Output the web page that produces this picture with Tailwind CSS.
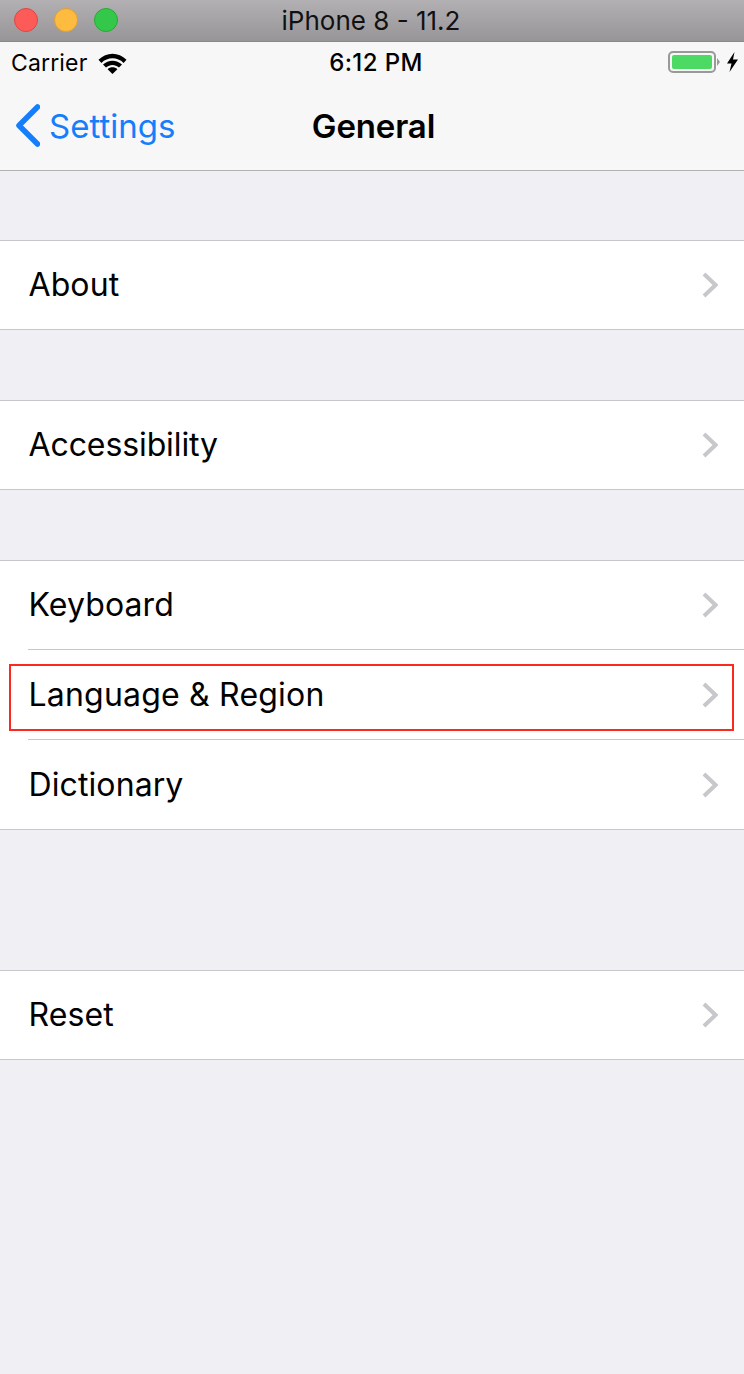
<!DOCTYPE html>
<html>
<head>
  <meta charset="UTF-8" />
  <title>General</title>
  <script src="https://cdn.jsdelivr.net/npm/@tailwindcss/browser@4"></script>
</head>
<body class="w-[744px] h-[1374px] overflow-hidden bg-[#efeff4] font-['Inter','Liberation_Sans',sans-serif] text-black">

  <!-- window title bar -->
  <div class="relative h-[42px] flex items-center justify-center bg-gradient-to-b from-[#b3b0b3] to-[#989598] border-b border-[#8a888a]">
    <div class="absolute left-[14px] top-[8px] flex gap-[16px]">
      <div class="w-[24px] h-[24px] rounded-full bg-[#fc5b57] border border-[#df4744]"></div>
      <div class="w-[24px] h-[24px] rounded-full bg-[#fdbc40] border border-[#de9f34]"></div>
      <div class="w-[24px] h-[24px] rounded-full bg-[#34c84a] border border-[#27aa35]"></div>
    </div>
    <span class="text-[26px] leading-[42px] text-[#111] mr-[2px]">iPhone 8 - 11.2</span>
  </div>

  <!-- status + nav bar -->
  <div class="h-[129px] bg-[#f7f7f7] border-b border-[#b2b2b2] flex flex-col">
    <div class="relative h-[40px] flex items-center justify-center">
      <div class="absolute left-[11px] top-[7px] flex items-center gap-[11px]">
        <span class="text-[23px] leading-[28px] tracking-[0.15px]">Carrier</span>
        <svg width="29" height="21" viewBox="0 0 29 21" fill="#000">
          <path d="M0.5 6.8C8.5 -1.4 20.5 -1.4 28.5 6.8L25.6 9.9C19.3 3.8 9.7 3.8 3.4 9.9Z"/>
          <path d="M5 11.5C10.3 6.4 18.7 6.4 24 11.5L21 14.6C17.2 11.1 11.8 11.1 8 14.6Z"/>
          <path d="M9.6 16.2C12.4 13.7 16.6 13.7 19.4 16.2L14.5 21Z"/>
        </svg>
      </div>
      <span class="text-[24px] leading-[28px] font-medium tracking-[0.4px] mt-[2px] ml-[8px]">6:12 PM</span>
      <div class="absolute right-[6px] top-[9px] flex items-center gap-[7px]">
        <div class="flex items-center gap-[1px]">
          <div class="w-[48px] h-[22px] rounded-[5px] border-[2px] border-[#999] p-[2px]">
            <div class="w-full h-full rounded-[2px] bg-[#4cd964]"></div>
          </div>
          <div class="w-0 h-0 border-y-[4px] border-y-transparent border-l-[3px] border-l-[#999]"></div>
        </div>
        <svg width="11" height="20" viewBox="0 0 11 20" fill="#000"><path d="M7.5 0L0 11.5H4.5L2.5 20L11 7.5H6Z"/></svg>
      </div>
    </div>
    <div class="relative flex-1 flex items-center justify-center">
      <div class="absolute left-[16px] top-[22px] flex items-center gap-[9px]">
        <svg width="24" height="43" viewBox="0 0 24 43" fill="none" stroke="#147efb" stroke-width="5.5" stroke-linecap="round" stroke-linejoin="round"><path d="M21.5 3L3 21.5L21.5 40"/></svg>
        <span class="text-[33px] leading-[42px] text-[#147efb]">Settings</span>
      </div>
      <span class="text-[33px] leading-[42px] font-semibold tracking-[-0.15px] ml-[3px]">General</span>
    </div>
  </div>

  <div class="relative">
    <!-- About -->
    <div class="mt-[69px] bg-white border-y border-[#c8c7cc]">
      <div class="h-[88px] pl-[28px] pr-[26px] flex items-center justify-between">
        <span class="text-[32px] tracking-[0.1px] ml-[0.5px]">About</span>
        <svg width="16" height="26" viewBox="0 0 16 26" fill="none" stroke="#c7c7cc" stroke-width="4"><path d="M2 2L13.5 13L2 24"/></svg>
      </div>
    </div>

    <!-- Accessibility -->
    <div class="mt-[70px] bg-white border-y border-[#c8c7cc]">
      <div class="h-[88px] pl-[28px] pr-[26px] flex items-center justify-between">
        <span class="text-[32px] tracking-[-0.1px] ml-[0.5px]">Accessibility</span>
        <svg width="16" height="26" viewBox="0 0 16 26" fill="none" stroke="#c7c7cc" stroke-width="4"><path d="M2 2L13.5 13L2 24"/></svg>
      </div>
    </div>

    <!-- Keyboard group -->
    <div class="mt-[70px] bg-white border-y border-[#c8c7cc]">
      <div class="pl-[28px]">
        <div class="h-[89px] pr-[26px] flex items-center justify-between border-b border-[#c8c7cc]">
          <span class="text-[32px] tracking-[0.1px] ml-[0.5px]">Keyboard</span>
          <svg width="16" height="26" viewBox="0 0 16 26" fill="none" stroke="#c7c7cc" stroke-width="4"><path d="M2 2L13.5 13L2 24"/></svg>
        </div>
        <div class="relative h-[90px] pr-[26px] flex items-center justify-between border-b border-[#c8c7cc]">
          <span class="text-[32px] tracking-[0.2px] ml-[0.5px]">Language &amp; Region</span>
          <svg width="16" height="26" viewBox="0 0 16 26" fill="none" stroke="#c7c7cc" stroke-width="4"><path d="M2 2L13.5 13L2 24"/></svg>
          <!-- red annotation box -->
          <div class="absolute left-[-19px] top-[14px] w-[725px] h-[67px] border-2 border-[#fb2a1e]"></div>
        </div>
        <div class="h-[89px] pr-[26px] flex items-center justify-between">
          <span class="text-[32px] tracking-[0.1px] ml-[0.5px]">Dictionary</span>
          <svg width="16" height="26" viewBox="0 0 16 26" fill="none" stroke="#c7c7cc" stroke-width="4"><path d="M2 2L13.5 13L2 24"/></svg>
        </div>
      </div>
    </div>

    <!-- Reset -->
    <div class="mt-[140px] bg-white border-y border-[#c8c7cc]">
      <div class="h-[88px] pl-[28px] pr-[26px] flex items-center justify-between">
        <span class="text-[32px] tracking-[0.1px] ml-[0.5px]">Reset</span>
        <svg width="16" height="26" viewBox="0 0 16 26" fill="none" stroke="#c7c7cc" stroke-width="4"><path d="M2 2L13.5 13L2 24"/></svg>
      </div>
    </div>
  </div>
</body>
</html>
